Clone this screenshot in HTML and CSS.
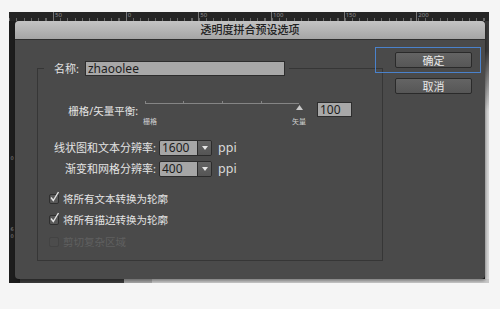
FILE: index.html
```html
<!DOCTYPE html>
<html lang="zh-CN">
<head>
    <meta charset="UTF-8">
    <meta name="viewport" content="width=device-width, initial-scale=1.0">
    <title>透明度拼合预设选项</title>
    <link rel="stylesheet" href="styles.css">
</head>
<body>
    <div class="stage">
        <!-- top ruler of the workspace -->
        <div class="ruler-top">
            <span>50</span>
            <span>0</span>
            <span>50</span>
            <span>100</span>
            <span>150</span>
            <span>200</span>
        </div>

        <div class="stage-mid">
            <div class="ruler-left">
                <span>0</span>
                <span class="ruler-left-gap">6</span>
                <span>0</span>
            </div>

            <div class="dialog">
                <div class="dialog-title">透明度拼合预设选项</div>

                <div class="dialog-body">
                    <fieldset class="group">
                        <legend class="name-row">
                            <label class="name-label" for="presetName">名称:</label>
                            <input class="field name-field" id="presetName" type="text" value="zhaoolee">
                        </legend>

                        <div class="balance-row">
                            <span class="balance-label">栅格/矢量平衡:</span>
                            <div class="slider">
                                <svg width="162" height="10" viewBox="0 0 162 10">
                                    <path d="M0.5 3.5H154" stroke="#858585" stroke-width="1" fill="none"/>
                                    <path d="M0.5 1V4M38.5 1V4M77.5 1V4M116.5 1V4" stroke="#858585" stroke-width="1"/>
                                    <polygon points="154.5,5 151,10 158,10" fill="#c9c9c9"/>
                                </svg>
                                <div class="slider-marks">
                                    <span>栅格</span>
                                    <span>矢量</span>
                                </div>
                            </div>
                            <input class="field balance-value" type="text" value="100">
                        </div>

                        <div class="res-row res-row-first">
                            <span class="res-label">线状图和文本分辨率:</span>
                            <div class="select">
                                <span class="select-value">1600</span>
                                <span class="select-arrow"></span>
                            </div>
                            <span class="unit">ppi</span>
                        </div>

                        <div class="res-row">
                            <span class="res-label">渐变和网格分辨率:</span>
                            <div class="select">
                                <span class="select-value">400</span>
                                <span class="select-arrow"></span>
                            </div>
                            <span class="unit">ppi</span>
                        </div>

                        <div class="check-row check-row-first">
                            <span class="check-box">
                                <svg width="11" height="12" viewBox="0 0 11 12">
                                    <path d="M2 6.5L4.3 9.5L9.5 1" stroke="#e2e2e2" stroke-width="1.4" fill="none"/>
                                </svg>
                            </span>
                            将所有文本转换为轮廓
                        </div>

                        <div class="check-row">
                            <span class="check-box">
                                <svg width="11" height="12" viewBox="0 0 11 12">
                                    <path d="M2 6.5L4.3 9.5L9.5 1" stroke="#e2e2e2" stroke-width="1.4" fill="none"/>
                                </svg>
                            </span>
                            将所有描边转换为轮廓
                        </div>

                        <div class="check-row check-row-last is-disabled">
                            <span class="check-box"></span>
                            剪切复杂区域
                        </div>
                    </fieldset>

                    <div class="actions">
                        <button class="btn btn-default">确定</button>
                        <button class="btn">取消</button>
                    </div>
                </div>
            </div>

            <div class="stage-side"></div>
        </div>

        <div class="stage-bottom"></div>
    </div>
</body>
</html>
```

FILE: styles.css
```css
* {
    margin: 0;
    padding: 0;
    box-sizing: border-box;
}
body {
    font-family: 'Noto Sans', 'Noto Sans CJK SC', sans-serif;
    background-color: #f5f5f5;
    padding: 12px 11px 0 9px;
}
.stage {
    width: 480px;
    height: 271px;
    display: flex;
    flex-direction: column;
    background-color: #1f1f1f;
}

/* rulers */
.ruler-top {
    height: 9px;
    display: flex;
    padding-left: 44px;
    background-color: #252525;
    background-image: repeating-linear-gradient(to right, #666 0 1px, transparent 1px 7.3px);
    background-size: 100% 3px;
    background-repeat: no-repeat;
    background-position: 0 6px;
}
.ruler-top span {
    width: 73px;
    height: 9px;
    border-left: 1px solid #777;
    padding-left: 1px;
    font-size: 6px;
    line-height: 6px;
    color: #8d8d8d;
}
.stage-mid {
    display: flex;
    height: 258px;
}
.ruler-left {
    width: 6px;
    display: flex;
    flex-direction: column;
    align-items: center;
    padding-top: 134px;
    background-color: #1d1d1d;
    font-family: 'DejaVu Sans', sans-serif;
    font-size: 5px;
    line-height: 7px;
    color: #8a8a8a;
}
.ruler-left-gap {
    margin-top: 64px;
}
.stage-side {
    width: 4px;
    background: linear-gradient(#3b3b3b 0, #3b3b3b 30px, #d8d8d8 90px);
}
.stage-bottom {
    height: 4px;
    background: linear-gradient(to right, #1c1c1c 0 11px, #3d3d3d 11px 115px, #a5a5a5 115px 143px, #c7c7c7 143px);
}

/* dialog */
.dialog {
    width: 470px;
    display: flex;
    flex-direction: column;
    background-color: #4a4a4a;
    border-radius: 4px;
    overflow: hidden;
    position: relative;
    z-index: 1;
    box-shadow: 1px 2px 3px rgba(0, 0, 0, 0.35);
}
.dialog-title {
    height: 19px;
    border-bottom: 1px solid #2f2f2f;
    background: linear-gradient(#c3c3c3, #a5a5a5);
    text-align: center;
    font-size: 11px;
    font-weight: 500;
    line-height: 18px;
    color: #222;
}
.dialog-body {
    flex: 1;
    display: flex;
    align-items: flex-start;
    padding-top: 21px;
}

/* group box */
.group {
    width: 346px;
    height: 200px;
    min-width: 0;
    margin-left: 22px;
    border: 1px solid #363636;
    font-size: 10.5px;
    color: #e4e4e4;
}
.name-row {
    display: flex;
    align-items: center;
    height: 15px;
    margin-left: 6px;
    padding: 0 4px 0 10px;
}
.name-label {
    font-size: 11px;
    line-height: 15px;
    margin-right: 6px;
    color: #e4e4e4;
}
.field {
    height: 15px;
    padding: 0 2px;
    border: 1px solid #2d2d2d;
    background-color: #a8a8a8;
    font-family: 'Noto Sans', sans-serif;
    font-size: 12px;
    line-height: 13px;
    color: #1c1c1c;
    outline: none;
}
.name-field {
    width: 200px;
}

/* raster / vector balance */
.balance-row {
    display: flex;
    align-items: flex-start;
    margin-top: 24px;
}
.balance-label {
    width: 100px;
    margin-top: 5px;
    text-align: right;
    line-height: 12px;
}
.slider {
    width: 162px;
    margin-left: 7px;
}
.slider svg {
    display: block;
}
.slider-marks {
    display: flex;
    justify-content: space-between;
    width: 163px;
    margin: 8px 0 0 -2px;
    font-size: 7px;
    line-height: 8px;
    color: #d0d0d0;
}
.balance-value {
    width: 35px;
    margin-top: 2px;
    margin-left: 10px;
}

/* resolution rows */
.res-row {
    display: flex;
    align-items: center;
    height: 16px;
    margin-top: 5px;
}
.res-row-first {
    margin-top: 14px;
}
.res-label {
    width: 118px;
    text-align: right;
    font-size: 11px;
    line-height: 16px;
}
.select {
    display: flex;
    width: 53px;
    height: 16px;
    margin-left: 3px;
    border: 1px solid #2b2b2b;
    border-radius: 2px;
    overflow: hidden;
}
.select-value {
    flex: 1;
    padding-left: 2px;
    background-color: #a6a6a6;
    font-size: 12px;
    line-height: 14px;
    color: #1c1c1c;
}
.select-arrow {
    width: 14px;
    display: flex;
    align-items: center;
    justify-content: center;
    border-left: 1px solid #2b2b2b;
    background: linear-gradient(#646464, #555);
}
.select-arrow::after {
    content: '';
    border-left: 3px solid transparent;
    border-right: 3px solid transparent;
    border-top: 4px solid #e6e6e6;
}
.unit {
    margin-left: 6px;
    font-size: 12.5px;
    line-height: 16px;
    color: #dadada;
}

/* checkboxes */
.check-row {
    display: flex;
    align-items: center;
    height: 12px;
    margin-top: 9px;
    margin-left: 11px;
    line-height: 12px;
}
.check-row-first {
    margin-top: 16px;
}
.check-row-last {
    margin-top: 10px;
}
.check-box {
    position: relative;
    width: 10px;
    height: 10px;
    margin-right: 4px;
    border: 1px solid #2f2f2f;
    border-radius: 2px;
    background-color: #585858;
}
.check-box svg {
    position: absolute;
    left: -1px;
    top: -4px;
}
.check-row.is-disabled {
    color: #606060;
}
.is-disabled .check-box {
    border-color: #434343;
    background-color: #4c4c4c;
}

/* buttons */
.actions {
    display: flex;
    flex-direction: column;
    gap: 10px;
    margin-left: 12px;
    padding-top: 12px;
    margin-top: -21px;
}
.btn {
    width: 77px;
    height: 16px;
    border: 1px solid #2a2a2a;
    border-radius: 2px;
    background: linear-gradient(#646464, #565656);
    font-family: 'Noto Sans CJK SC', sans-serif;
    font-size: 11px;
    line-height: 14px;
    color: #e8e8e8;
}
.btn-default {
    position: relative;
}
.btn-default::before {
    content: '';
    position: absolute;
    top: -6px;
    left: -21px;
    right: -10px;
    bottom: -6px;
    border: 1px solid #4a82cc;
}
```
